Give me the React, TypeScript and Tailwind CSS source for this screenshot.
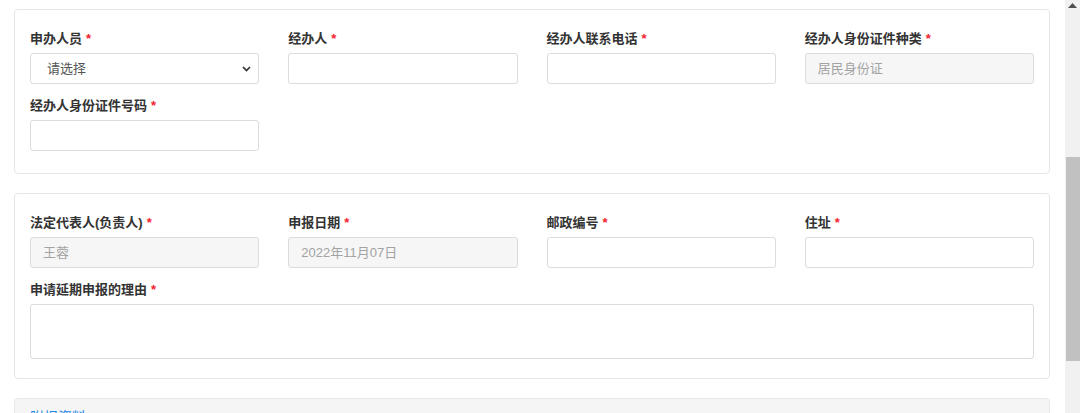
import React from "react";

// Field config - one entry per form control
interface Field {
  label: string;
  kind: "select" | "input" | "disabled" | "textarea";
  value?: string;
  full?: boolean;
}

const APPLICANT_FIELDS: Field[] = [
  { label: "申办人员", kind: "select", value: "请选择" },
  { label: "经办人", kind: "input" },
  { label: "经办人联系电话", kind: "input" },
  { label: "经办人身份证件种类", kind: "disabled", value: "居民身份证" },
  { label: "经办人身份证件号码", kind: "input" },
];

const COMPANY_FIELDS: Field[] = [
  { label: "法定代表人(负责人)", kind: "disabled", value: "王蓉" },
  { label: "申报日期", kind: "disabled", value: "2022年11月07日" },
  { label: "邮政编号", kind: "input" },
  { label: "住址", kind: "input" },
  { label: "申请延期申报的理由", kind: "textarea", full: true },
];

function Chevron() {
  return (
    <svg width="9" height="6" viewBox="0 0 9 6" className="shrink-0">
      <path d="M1 1 L4.5 4.5 L8 1" fill="none" stroke="#333" strokeWidth="1.7" />
    </svg>
  );
}

function Control({ field }: { field: Field }) {
  const base = "w-full rounded-[3px] border border-[#dcdcdc] text-[13px]";
  if (field.kind === "select") {
    return (
      <div className={`${base} h-[31px] bg-white flex items-center justify-between pl-4 pr-[7px] text-[#555]`}>
        <span>{field.value}</span>
        <Chevron />
      </div>
    );
  }
  if (field.kind === "disabled") {
    return (
      <div className={`${base} h-[31px] bg-[#f6f6f6] flex items-center px-3 text-[#a3a3a3]`}>
        {field.value}
      </div>
    );
  }
  if (field.kind === "textarea") {
    return <div className={`${base} h-[55px] bg-white`} />;
  }
  return <div className={`${base} h-[31px] bg-white`} />;
}

function FormCard({ fields, pb }: { fields: Field[]; pb: string }) {
  return (
    <div className={`rounded-[4px] border border-[#e6e6e6] bg-white px-[15px] pt-[19px] ${pb}`}>
      <div className="grid grid-cols-4 gap-x-[29px] gap-y-3">
        {fields.map((f) => (
          <div key={f.label} className={f.full ? "col-span-4" : ""}>
            <div className="h-5 leading-5 mb-1 text-[13px] font-bold text-[#333] flex items-center">
              <span>{f.label}</span>
              <span className="ml-[4px] text-[#f5222d] text-[13px] font-bold">*</span>
            </div>
            <Control field={f} />
          </div>
        ))}
      </div>
    </div>
  );
}

export default function App() {
  return (
    <div
      className="h-[413px] w-[1080px] overflow-hidden flex bg-white"
      style={{ fontFamily: '"Liberation Sans", "Noto Sans CJK SC", sans-serif' }}
    >
      {/* Page content */}
      <div className="flex-1 pl-[14px] pr-[15px] pt-[9px] flex flex-col gap-[19px]">
        <FormCard fields={APPLICANT_FIELDS} pb="pb-[22px]" />
        <FormCard fields={COMPANY_FIELDS} pb="pb-[19px]" />

        {/* Attachments section, cut off by the window */}
        <div className="rounded-[4px] border border-[#e6e6e6] bg-[#f5f5f5] px-[15px] pt-[6px] h-[60px]">
          <span className="text-[14px] leading-5 text-[#1e88e5]">附报资料</span>
        </div>
      </div>

      {/* Scrollbar */}
      <div className="w-[15px] bg-[#f1f1f1] flex flex-col items-end">
        <div className="w-full flex justify-center pt-[3px]">
          <svg width="9" height="5" viewBox="0 0 9 5">
            <path d="M0 5 L4.5 0 L9 5 Z" fill="#505050" />
          </svg>
        </div>
        <div className="mt-[149px] w-[14px] h-[204px] bg-[#c1c1c1]" />
      </div>
    </div>
  );
}
